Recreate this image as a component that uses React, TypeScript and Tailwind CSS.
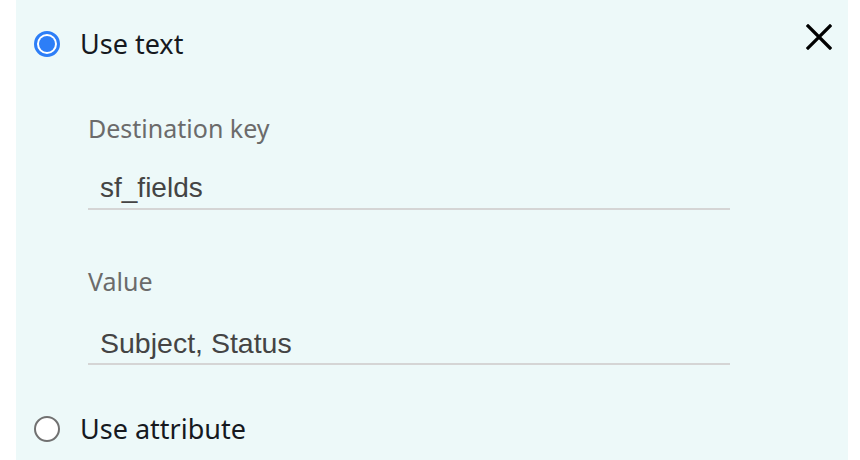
export default function App() {
  return (
    <div className="w-[860px] h-[460px] bg-white pl-4 pr-3 overflow-hidden">
      <div className="h-full bg-[#edf9f9] pl-[18px] pr-[16px] flex flex-col">
        <div className="h-[88px] flex items-center justify-between">
          <label className="flex items-center gap-[20px]">
            <span className="w-[26px] h-[26px] rounded-full border-[3px] border-[#2d7ef7] bg-white flex items-center justify-center">
              <span className="w-[16px] h-[16px] rounded-full bg-[#2d7ef7]" />
            </span>
            <span className="text-[27px] leading-[32px] text-[#16191f] font-['Noto_Sans',sans-serif]">Use text</span>
          </label>
          <svg className="self-start mt-[24px]" width="26" height="26" viewBox="0 0 26 26">
            <path d="M2 2L24 24M24 2L2 24" stroke="#000" strokeWidth="3.2" strokeLinecap="square" fill="none" />
          </svg>
        </div>

        <div className="ml-[54px] w-[642px] flex flex-col">
          <div className="mt-[24px] text-[25px] leading-[32px] text-[#6b6b6b] font-['Noto_Sans',sans-serif]">Destination key</div>
          <div className="mt-[22px] pt-[6px] pb-[4px] pl-[12px] border-b-2 border-[#d5d5d5] text-[28px] leading-[32px] text-[#444] font-['Liberation_Sans',Arial,sans-serif]">
            sf_fields
          </div>

          <div className="mt-[55px] text-[25px] leading-[32px] text-[#6b6b6b] font-['Noto_Sans',sans-serif]">Value</div>
          <div className="mt-[24px] pt-[6px] pb-[4px] pl-[12px] border-b-2 border-[#d5d5d5] text-[28.5px] leading-[32px] text-[#444] font-['Liberation_Sans',Arial,sans-serif]">
            Subject, Status
          </div>
        </div>

        <label className="mt-[40px] h-[48px] flex items-center gap-[20px]">
          <span className="w-[26px] h-[26px] rounded-full border-2 border-[#717171] bg-white" />
          <span className="text-[27px] leading-[32px] text-[#16191f] font-['Noto_Sans',sans-serif]">Use attribute</span>
        </label>
      </div>
    </div>
  );
}
